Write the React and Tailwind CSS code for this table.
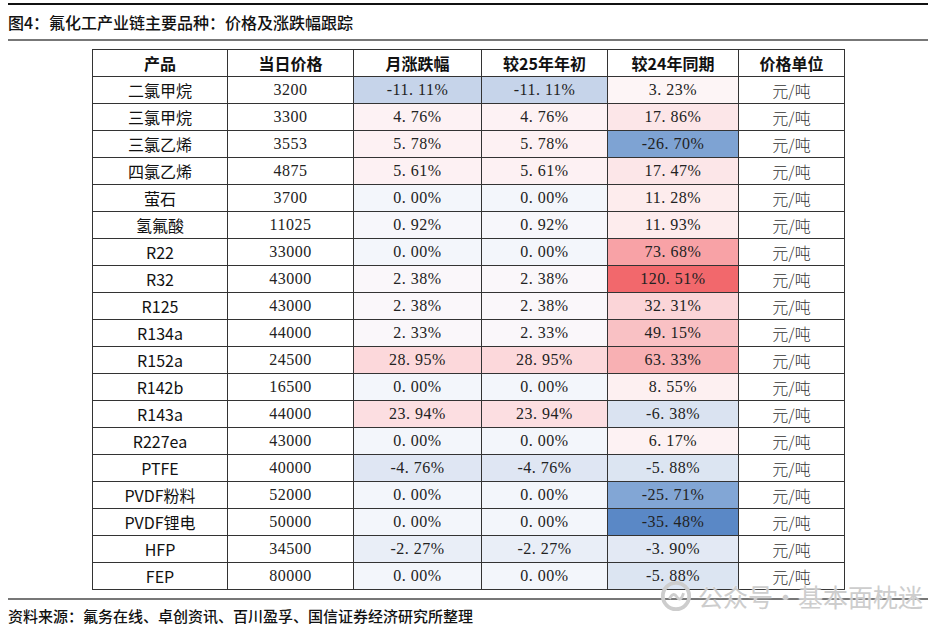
import React from "react"

const rows = [
  ["二氯甲烷", "3200", "-11.11%", "bg-[#c6d4ea]", "3.23%", "bg-[#fdf5f6]"],
  ["三氯甲烷", "3300", "4.76%", "bg-[#fdf2f4]", "17.86%", "bg-[#fce6e8]"],
  ["三氯乙烯", "3553", "5.78%", "bg-[#fdf1f3]", "-26.70%", "bg-[#7ea3d3]"],
  ["四氯乙烯", "4875", "5.61%", "bg-[#fdf1f3]", "17.47%", "bg-[#fce6e8]"],
  ["萤石", "3700", "0.00%", "bg-[#f3f6fb]", "11.28%", "bg-[#fdeced]"],
  ["氢氟酸", "11025", "0.92%", "bg-[#f7f7fb]", "11.93%", "bg-[#fdeced]"],
  ["R22", "33000", "0.00%", "bg-[#f3f6fb]", "73.68%", "bg-[#f8a2a6]"],
  ["R32", "43000", "2.38%", "bg-[#faf7fa]", "120.51%", "bg-[#f2686c]"],
  ["R125", "43000", "2.38%", "bg-[#faf7fa]", "32.31%", "bg-[#fbd5d8]"],
  ["R134a", "44000", "2.33%", "bg-[#faf7fa]", "49.15%", "bg-[#f9c1c4]"],
  ["R152a", "24500", "28.95%", "bg-[#fcd8db]", "63.33%", "bg-[#f8b0b3]"],
  ["R142b", "16500", "0.00%", "bg-[#f3f6fb]", "8.55%", "bg-[#fdf0f1]"],
  ["R143a", "44000", "23.94%", "bg-[#fcdee1]", "-6.38%", "bg-[#dae3f1]"],
  ["R227ea", "43000", "0.00%", "bg-[#f3f6fb]", "6.17%", "bg-[#fdf2f3]"],
  ["PTFE", "40000", "-4.76%", "bg-[#dfe6f3]", "-5.88%", "bg-[#dce5f2]"],
  ["PVDF粉料", "52000", "0.00%", "bg-[#f3f6fb]", "-25.71%", "bg-[#82a6d5]"],
  ["PVDF锂电", "50000", "0.00%", "bg-[#f3f6fb]", "-35.48%", "bg-[#5a88c6]"],
  ["HFP", "34500", "-2.27%", "bg-[#e9eef7]", "-3.90%", "bg-[#e3e9f4]"],
  ["FEP", "80000", "0.00%", "bg-[#f3f6fb]", "-5.88%", "bg-[#dce5f2]"],
]

const serif = "font-['Liberation_Serif',serif] text-[16px] text-[#222] tracking-[0.5px]"
const sans = "font-['Noto_Sans_CJK_SC','Noto_Sans',sans-serif]"

const Num = ({ v }) => {
  const [a, b] = v.split(".")
  if (b === undefined) return <span>{v}</span>
  return (
    <span>
      {a}
      <span className="inline-block w-[9px] text-left">.</span>
      {b}
    </span>
  )
}

const cell = "border border-[#333] text-center p-0 h-[27px]"

export default function App() {
  return (
    <div className={`relative w-[936px] h-[630px] bg-white overflow-hidden ${sans}`}>
      <div className="px-[8px] pt-[3px]">
        <div className="h-[2px] bg-[#111]" />
        <div className="h-[34px] flex items-center text-[16px] font-medium text-[#111] leading-none">
          图4：氟化工产业链主要品种：价格及涨跌幅跟踪
        </div>
        <div className="h-[2px] bg-[#777]" />

        <div className="pl-[84px] pt-[8px]">
          <table className="table-fixed border-collapse w-[752px] border border-[#111]">
            <colgroup>
              <col className="w-[135px]" />
              <col className="w-[126px]" />
              <col className="w-[128px]" />
              <col className="w-[126px]" />
              <col className="w-[131px]" />
              <col className="w-[106px]" />
            </colgroup>
            <thead>
              <tr className="text-[16px] font-bold text-[#111]">
                <th className={cell}>产品</th>
                <th className={cell}>当日价格</th>
                <th className={cell}>月涨跌幅</th>
                <th className={cell}>较25年年初</th>
                <th className={cell}>较24年同期</th>
                <th className={cell}>价格单位</th>
              </tr>
            </thead>
            <tbody>
              {rows.map((r) => (
                <tr key={r[0]}>
                  <td className={`${cell} text-[16px] text-[#111]`}>{r[0]}</td>
                  <td className={`${cell} ${serif}`}><Num v={r[1]} /></td>
                  <td className={`${cell} ${serif} ${r[3]}`}><Num v={r[2]} /></td>
                  <td className={`${cell} ${serif} ${r[3]}`}><Num v={r[2]} /></td>
                  <td className={`${cell} ${serif} ${r[5]}`}><Num v={r[4]} /></td>
                  <td className={`${cell} text-[16px] text-[#333] font-light`}>元/吨</td>
                </tr>
              ))}
            </tbody>
          </table>
        </div>

        <div className="mt-[8px] h-[2px] bg-[#777]" />
        <div className="h-[30px] flex items-center text-[15px] font-medium text-[#111] leading-none">
          资料来源：氟务在线、卓创资讯、百川盈孚、国信证券经济研究所整理
        </div>
      </div>

      <div className="absolute left-[660px] top-[580px] flex items-center gap-[6px] text-[#cdcdcd] whitespace-nowrap">
        <svg width="32" height="32" viewBox="0 0 34 34">
          <circle cx="17" cy="17" r="14" fill="none" stroke="#cdcdcd" strokeWidth="4" />
          <path d="M10 20 q4 -8 8 -2 q4 6 7 -4" fill="none" stroke="#cdcdcd" strokeWidth="3" />
        </svg>
        <span className="text-[25px] leading-none [text-shadow:0_0_2px_#fff]">公众号·基本面枕迷</span>
      </div>
    </div>
  )
}
